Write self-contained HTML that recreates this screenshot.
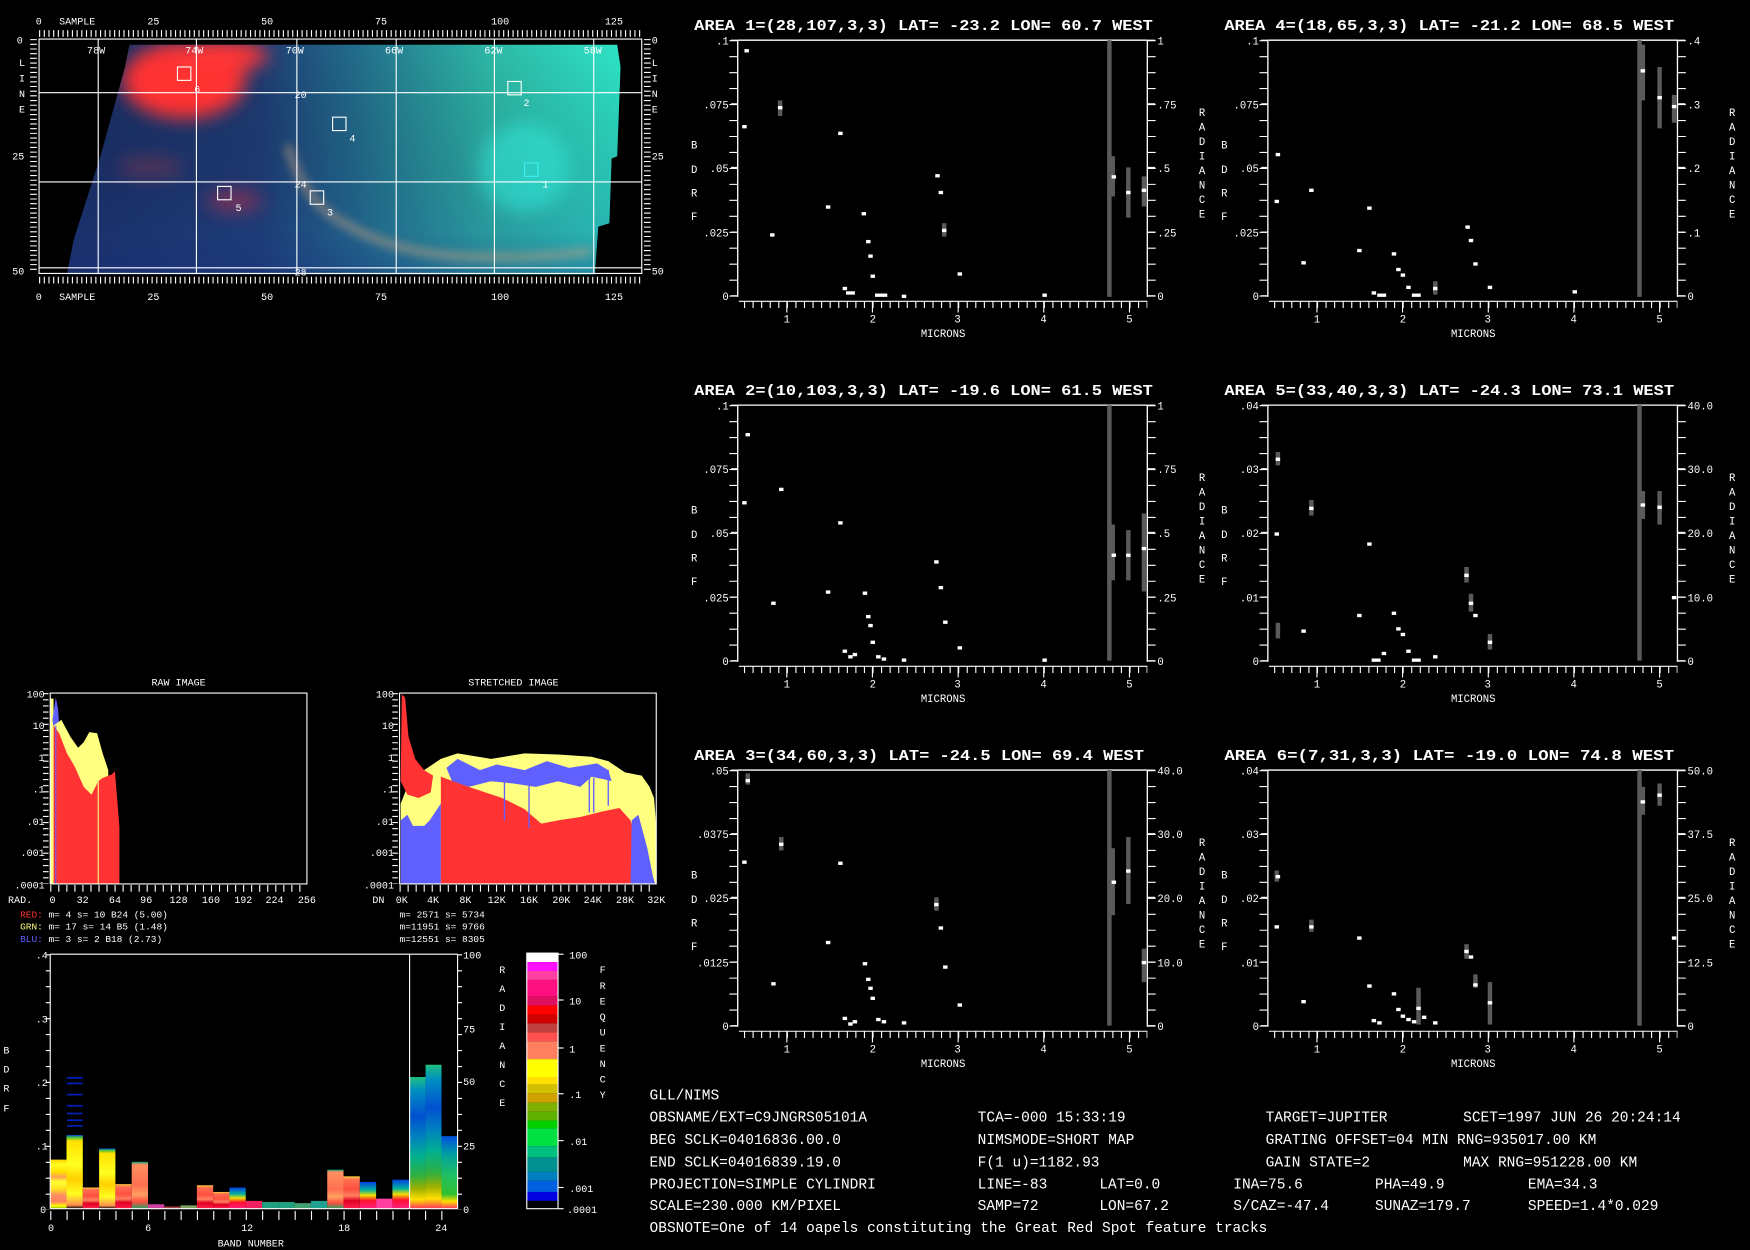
<!DOCTYPE html>
<html><head><meta charset="utf-8"><style>
html,body{margin:0;padding:0;background:#000;width:1750px;height:1250px;overflow:hidden}
svg{display:block}
text{font-family:"Liberation Mono","DejaVu Sans Mono",monospace;fill:#fff}
</style></head><body>
<svg width="1750" height="1250" viewBox="0 0 1568 1120" xmlns="http://www.w3.org/2000/svg">
<defs>
<linearGradient id="mapg" x1="0" y1="0" x2="1" y2="0">
<stop offset="0" stop-color="#1a2c62"/><stop offset=".35" stop-color="#1e3c74"/><stop offset=".5" stop-color="#22688a"/><stop offset=".75" stop-color="#2ebaa8"/><stop offset="1" stop-color="#2eeacc"/></linearGradient>
<linearGradient id="mapv" x1="0" y1="0" x2="0" y2="1"><stop offset="0" stop-color="#000" stop-opacity="0"/><stop offset=".8" stop-color="#1a3a80" stop-opacity=".25"/><stop offset="1" stop-color="#1a3080" stop-opacity=".5"/></linearGradient>
<filter id="bl"><feGaussianBlur stdDeviation="8"/></filter>
<filter id="bl2"><feGaussianBlur stdDeviation="4"/></filter>
<clipPath id="mclip"><polygon points="116,40 553,40 556,60 553,140 548,142 546,200 536,203 533,246 100,246 60,246 66,215 90,140 112,60"/></clipPath>
<linearGradient id="gy" x1="0" y1="0" x2="0" y2="1">
<stop offset="0" stop-color="#ffd000"/><stop offset=".1" stop-color="#ffff20"/><stop offset=".25" stop-color="#ffe000"/><stop offset=".35" stop-color="#ffa050"/><stop offset=".45" stop-color="#ffff30"/><stop offset=".6" stop-color="#ffe020"/><stop offset=".72" stop-color="#ff9060"/><stop offset=".85" stop-color="#ff8060"/><stop offset=".95" stop-color="#ffff00"/><stop offset="1" stop-color="#60b000"/></linearGradient>
<linearGradient id="gy2" x1="0" y1="0" x2="0" y2="1">
<stop offset="0" stop-color="#0040e0"/><stop offset=".03" stop-color="#40c040"/><stop offset=".08" stop-color="#ffe000"/><stop offset=".4" stop-color="#ffff20"/><stop offset=".6" stop-color="#ffd000"/><stop offset=".8" stop-color="#ffff20"/><stop offset=".95" stop-color="#ff9050"/><stop offset="1" stop-color="#000"/></linearGradient>
<linearGradient id="gr" x1="0" y1="0" x2="0" y2="1">
<stop offset="0" stop-color="#ffd040"/><stop offset=".1" stop-color="#ff7050"/><stop offset=".4" stop-color="#ff5040"/><stop offset=".6" stop-color="#ff8060"/><stop offset=".75" stop-color="#e00020"/><stop offset="1" stop-color="#ff2050"/></linearGradient>
<linearGradient id="go" x1="0" y1="0" x2="0" y2="1">
<stop offset="0" stop-color="#00a080"/><stop offset=".06" stop-color="#ff9060"/><stop offset=".5" stop-color="#ff7050"/><stop offset=".7" stop-color="#ffa060"/><stop offset=".85" stop-color="#ff5040"/><stop offset="1" stop-color="#20a060"/></linearGradient>
<linearGradient id="gb" x1="0" y1="0" x2="0" y2="1">
<stop offset="0" stop-color="#0040e0"/><stop offset=".3" stop-color="#00b0a0"/><stop offset=".5" stop-color="#f0e000"/><stop offset=".7" stop-color="#ff1030"/><stop offset="1" stop-color="#ff2080"/></linearGradient>
<linearGradient id="gt" x1="0" y1="0" x2="0" y2="1">
<stop offset="0" stop-color="#20c080"/><stop offset=".1" stop-color="#0090c0"/><stop offset=".3" stop-color="#0050d0"/><stop offset=".45" stop-color="#0080c0"/><stop offset=".6" stop-color="#00b090"/><stop offset=".75" stop-color="#30b040"/><stop offset=".85" stop-color="#a0b000"/><stop offset=".93" stop-color="#ffe000"/><stop offset="1" stop-color="#ff3060"/></linearGradient>
<linearGradient id="gt2" x1="0" y1="0" x2="0" y2="1">
<stop offset="0" stop-color="#0050e0"/><stop offset=".25" stop-color="#00a0a0"/><stop offset=".55" stop-color="#20c060"/><stop offset=".8" stop-color="#30c030"/><stop offset=".9" stop-color="#ffe000"/><stop offset="1" stop-color="#ff3060"/></linearGradient>
<g id="pframe" stroke="#fff" fill="none">
<line x1="661" y1="36" x2="1028" y2="36" stroke-width="1.2"/>
<line x1="661" y1="36" x2="661" y2="266" stroke-width="1.2"/>
<line x1="1028" y1="36" x2="1028" y2="266" stroke-width="1.2"/>
<line x1="657" y1="36" x2="657" y2="267" stroke-width="7" stroke-dasharray="1 13.3"/>
<line x1="1032" y1="36" x2="1032" y2="267" stroke-width="7" stroke-dasharray="1 13.3"/>
<line x1="655" y1="36" x2="661" y2="36"/><line x1="655" y1="93" x2="661" y2="93"/><line x1="655" y1="150" x2="661" y2="150"/><line x1="655" y1="208" x2="661" y2="208"/><line x1="655" y1="265" x2="661" y2="265"/>
<line x1="1028" y1="36" x2="1035" y2="36"/><line x1="1028" y1="93" x2="1035" y2="93"/><line x1="1028" y1="150" x2="1035" y2="150"/><line x1="1028" y1="208" x2="1035" y2="208"/><line x1="1028" y1="265" x2="1035" y2="265"/>
<line x1="662" y1="270" x2="1028" y2="270" stroke-width="1"/>
<line x1="666.6" y1="273" x2="1028" y2="273" stroke-width="6" stroke-dasharray="1 6.675"/>
<line x1="705" y1="270" x2="705" y2="280"/><line x1="781.7" y1="270" x2="781.7" y2="280"/><line x1="858.5" y1="270" x2="858.5" y2="280"/><line x1="935.2" y1="270" x2="935.2" y2="280"/><line x1="1012" y1="270" x2="1012" y2="280"/>
</g>
<g id="pxl" font-size="9.5" text-anchor="middle">
<text x="705" y="289">1</text><text x="782" y="289">2</text><text x="858" y="289">3</text><text x="935" y="289">4</text><text x="1012" y="289">5</text>
<text x="845" y="302">MICRONS</text>
<text x="622" y="133">B</text><text x="622" y="155">D</text><text x="622" y="176">R</text><text x="622" y="197">F</text>
</g>
<g id="prl" font-size="9.5" text-anchor="middle">
<text x="1077" y="104">R</text><text x="1077" y="117">A</text><text x="1077" y="130">D</text><text x="1077" y="143">I</text><text x="1077" y="156">A</text><text x="1077" y="169">N</text><text x="1077" y="182">C</text><text x="1077" y="195">E</text>
</g>
</defs>

<!-- ===== MAP ===== -->
<g clip-path="url(#mclip)">
<rect x="50" y="35" width="520" height="215" fill="url(#mapg)"/>
<rect x="50" y="35" width="520" height="215" fill="url(#mapv)"/>
<g filter="url(#bl)">
<ellipse cx="165" cy="72" rx="55" ry="34" fill="#ff3030"/>
<ellipse cx="195" cy="50" rx="45" ry="14" fill="#ff3535"/>
<ellipse cx="210" cy="180" rx="25" ry="10" fill="#a03050" opacity=".7"/>
<ellipse cx="135" cy="150" rx="30" ry="10" fill="#703050" opacity=".6"/>
<ellipse cx="470" cy="150" rx="40" ry="40" fill="#30f0e0" opacity=".5"/>
</g>
<path d="M258,130 Q270,175 300,195 Q350,228 420,230 Q480,232 530,225" stroke="#c8a080" stroke-width="8" fill="none" opacity=".5" filter="url(#bl2)"/>
</g>
<g stroke="#fff" stroke-width="1" fill="none">
<rect x="35" y="35" width="540" height="210"/>
<line x1="35" y1="83" x2="575" y2="83"/><line x1="35" y1="163" x2="575" y2="163"/><line x1="35" y1="240" x2="575" y2="240"/>
<line x1="88" y1="35" x2="88" y2="245"/><line x1="176" y1="35" x2="176" y2="245"/><line x1="266" y1="35" x2="266" y2="245"/><line x1="355" y1="35" x2="355" y2="245"/><line x1="443" y1="35" x2="443" y2="245"/><line x1="532" y1="35" x2="532" y2="245"/>
<line x1="35" y1="30" x2="575" y2="30" stroke-width="6" stroke-dasharray="1 3.2"/>
<line x1="35" y1="251" x2="575" y2="251" stroke-width="6" stroke-dasharray="1 3.2"/>
<line x1="30" y1="35" x2="30" y2="245" stroke-width="6" stroke-dasharray="1 3.2"/>
<line x1="580" y1="35" x2="580" y2="245" stroke-width="6" stroke-dasharray="1 3.2"/>
<rect x="159" y="60" width="12" height="12"/><rect x="455" y="73" width="12" height="12"/><rect x="298" y="105" width="12" height="12"/><rect x="195" y="167" width="12" height="12"/><rect x="278" y="171" width="12" height="12"/>
<rect x="470" y="146" width="12" height="12" stroke="#40f0f0"/>
</g>
<g font-size="9" fill="#fff">
<text x="32" y="22">0</text><text x="53" y="22">SAMPLE</text><text x="132" y="22">25</text><text x="234" y="22">50</text><text x="336" y="22">75</text><text x="440" y="22">100</text><text x="542" y="22">125</text>
<text x="32" y="269">0</text><text x="53" y="269">SAMPLE</text><text x="132" y="269">25</text><text x="234" y="269">50</text><text x="336" y="269">75</text><text x="440" y="269">100</text><text x="542" y="269">125</text>
<text x="15" y="39">0</text><text x="11" y="143">25</text><text x="11" y="246">50</text>
<text x="584" y="39">0</text><text x="584" y="143">25</text><text x="584" y="246">50</text>
<text x="17" y="59">L</text><text x="17" y="73">I</text><text x="17" y="87">N</text><text x="17" y="101">E</text>
<text x="584" y="59">L</text><text x="584" y="73">I</text><text x="584" y="87">N</text><text x="584" y="101">E</text>
<text x="78" y="48">78W</text><text x="166" y="48">74W</text><text x="256" y="48">70W</text><text x="345" y="48">66W</text><text x="434" y="48">62W</text><text x="523" y="48">58W</text>
<text x="264" y="88">20</text><text x="264" y="168">24</text><text x="264" y="247">28</text>
<text x="174" y="83">6</text><text x="469" y="95">2</text><text x="313" y="127">4</text><text x="211" y="189">5</text><text x="293" y="193">3</text><text x="486" y="168" fill="#40f0f0">1</text>
</g>

<!-- ===== SPECTRAL PANELS ===== -->
<g font-size="13.5" font-weight="bold" xml:space="preserve">
<text x="622" y="27" textLength="411" lengthAdjust="spacingAndGlyphs">AREA 1=(28,107,3,3) LAT= -23.2 LON=  60.7 WEST</text>
<text x="1097" y="27" textLength="403" lengthAdjust="spacingAndGlyphs">AREA 4=(18,65,3,3) LAT= -21.2 LON=  68.5 WEST</text>
<text x="622" y="354" textLength="411" lengthAdjust="spacingAndGlyphs">AREA 2=(10,103,3,3) LAT= -19.6 LON=  61.5 WEST</text>
<text x="1097" y="354" textLength="403" lengthAdjust="spacingAndGlyphs">AREA 5=(33,40,3,3) LAT= -24.3 LON=  73.1 WEST</text>
<text x="622" y="681" textLength="403" lengthAdjust="spacingAndGlyphs">AREA 3=(34,60,3,3) LAT= -24.5 LON=  69.4 WEST</text>
<text x="1097" y="681" textLength="403" lengthAdjust="spacingAndGlyphs">AREA 6=(7,31,3,3) LAT= -19.0 LON=  74.8 WEST</text>
</g>
<use href="#pframe"/><use href="#pframe" transform="translate(475,0)"/>
<use href="#pframe" transform="translate(0,327)"/><use href="#pframe" transform="translate(475,327)"/>
<use href="#pframe" transform="translate(0,654)"/><use href="#pframe" transform="translate(475,654)"/>
<use href="#pxl"/><use href="#pxl" transform="translate(475,0)"/>
<use href="#pxl" transform="translate(0,327)"/><use href="#pxl" transform="translate(475,327)"/>
<use href="#pxl" transform="translate(0,654)"/><use href="#pxl" transform="translate(475,654)"/>
<use href="#prl"/><use href="#prl" transform="translate(475,0)"/>
<use href="#prl" transform="translate(0,327)"/><use href="#prl" transform="translate(475,327)"/>
<use href="#prl" transform="translate(0,654)"/><use href="#prl" transform="translate(475,654)"/>
<g font-size="9.5" text-anchor="end">
<text x="653" y="40">.1</text><text x="653" y="97">.075</text><text x="653" y="154">.05</text><text x="653" y="212">.025</text><text x="653" y="269">0</text>
<text x="1128" y="40">.1</text><text x="1128" y="97">.075</text><text x="1128" y="154">.05</text><text x="1128" y="212">.025</text><text x="1128" y="269">0</text>
<text x="653" y="367">.1</text><text x="653" y="424">.075</text><text x="653" y="481">.05</text><text x="653" y="539">.025</text><text x="653" y="596">0</text>
<text x="1128" y="367">.04</text><text x="1128" y="424">.03</text><text x="1128" y="481">.02</text><text x="1128" y="539">.01</text><text x="1128" y="596">0</text>
<text x="653" y="694">.05</text><text x="653" y="751">.0375</text><text x="653" y="808">.025</text><text x="653" y="866">.0125</text><text x="653" y="923">0</text>
<text x="1128" y="694">.04</text><text x="1128" y="751">.03</text><text x="1128" y="808">.02</text><text x="1128" y="866">.01</text><text x="1128" y="923">0</text>
</g>
<g font-size="9.5">
<text x="1037" y="40">1</text><text x="1037" y="97">.75</text><text x="1037" y="154">.5</text><text x="1037" y="212">.25</text><text x="1037" y="269">0</text>
<text x="1512" y="40">.4</text><text x="1512" y="97">.3</text><text x="1512" y="154">.2</text><text x="1512" y="212">.1</text><text x="1512" y="269">0</text>
<text x="1037" y="367">1</text><text x="1037" y="424">.75</text><text x="1037" y="481">.5</text><text x="1037" y="539">.25</text><text x="1037" y="596">0</text>
<text x="1512" y="367">40.0</text><text x="1512" y="424">30.0</text><text x="1512" y="481">20.0</text><text x="1512" y="539">10.0</text><text x="1512" y="596">0</text>
<text x="1037" y="694">40.0</text><text x="1037" y="751">30.0</text><text x="1037" y="808">20.0</text><text x="1037" y="866">10.0</text><text x="1037" y="923">0</text>
<text x="1512" y="694">50.0</text><text x="1512" y="751">37.5</text><text x="1512" y="808">25.0</text><text x="1512" y="866">12.5</text><text x="1512" y="923">0</text>
</g>
<!-- gray bars -->
<g fill="#5a5a5a">
<rect x="992" y="36" width="4" height="230"/><rect x="995" y="140" width="4" height="36"/><rect x="1009" y="150" width="4" height="45"/><rect x="1023" y="158" width="4" height="27"/><rect x="697" y="90" width="4" height="14"/><rect x="844" y="200" width="4" height="12"/>
<rect x="1467" y="36" width="4" height="230"/><rect x="1470" y="40" width="4" height="50"/><rect x="1485" y="60" width="4" height="55"/><rect x="1498" y="85" width="4" height="25"/><rect x="1284" y="252" width="4" height="12"/>
<rect x="992" y="363" width="4" height="229"/><rect x="995" y="470" width="4" height="50"/><rect x="1009" y="475" width="4" height="45"/><rect x="1023" y="460" width="4" height="70"/>
<rect x="1467" y="363" width="4" height="229"/><rect x="1470" y="440" width="4" height="25"/><rect x="1485" y="440" width="4" height="30"/><rect x="1312" y="508" width="4" height="14"/><rect x="1316" y="532" width="4" height="16"/><rect x="1333" y="568" width="4" height="14"/><rect x="1143" y="405" width="4" height="12"/><rect x="1173" y="448" width="4" height="14"/><rect x="1143" y="558" width="4" height="14"/>
<rect x="992" y="690" width="4" height="229"/><rect x="995" y="760" width="4" height="60"/><rect x="1009" y="750" width="4" height="60"/><rect x="1023" y="850" width="4" height="30"/><rect x="837" y="804" width="4" height="12"/><rect x="668" y="693" width="4" height="10"/><rect x="698" y="750" width="4" height="12"/>
<rect x="1467" y="690" width="4" height="229"/><rect x="1470" y="705" width="4" height="25"/><rect x="1485" y="702" width="4" height="20"/><rect x="1269" y="885" width="4" height="33"/><rect x="1312" y="846" width="4" height="13"/><rect x="1320" y="873" width="4" height="12"/><rect x="1333" y="880" width="4" height="38"/><rect x="1142" y="780" width="4" height="10"/><rect x="1173" y="824" width="4" height="11"/>
</g>
<g fill="#fff">
<rect x="667" y="44" width="4" height="3"/><rect x="665" y="112" width="4" height="3"/><rect x="690" y="209" width="4" height="3"/><rect x="697" y="95" width="4" height="3"/><rect x="740" y="184" width="4" height="3"/><rect x="751" y="118" width="4" height="3"/><rect x="755" y="257" width="4" height="3"/><rect x="758" y="261" width="8" height="3"/><rect x="772" y="190" width="4" height="3"/><rect x="776" y="215" width="4" height="3"/><rect x="778" y="228" width="4" height="3"/><rect x="780" y="246" width="4" height="3"/><rect x="784" y="263" width="11" height="3"/><rect x="808" y="264" width="4" height="3"/><rect x="838" y="156" width="4" height="3"/><rect x="841" y="171" width="4" height="3"/><rect x="844" y="205" width="4" height="3"/><rect x="858" y="244" width="4" height="3"/><rect x="934" y="263" width="4" height="3"/><rect x="996" y="157" width="4" height="3"/><rect x="1009" y="171" width="4" height="3"/><rect x="1023" y="169" width="4" height="3"/>
<rect x="1142" y="179" width="4" height="3"/><rect x="1143" y="137" width="4" height="3"/><rect x="1166" y="234" width="4" height="3"/><rect x="1173" y="169" width="4" height="3"/><rect x="1216" y="223" width="4" height="3"/><rect x="1225" y="185" width="4" height="3"/><rect x="1229" y="261" width="4" height="3"/><rect x="1234" y="263" width="8" height="3"/><rect x="1247" y="226" width="4" height="3"/><rect x="1251" y="240" width="4" height="3"/><rect x="1255" y="245" width="4" height="3"/><rect x="1260" y="256" width="4" height="3"/><rect x="1265" y="263" width="8" height="3"/><rect x="1284" y="257" width="4" height="3"/><rect x="1313" y="202" width="4" height="3"/><rect x="1316" y="214" width="4" height="3"/><rect x="1320" y="235" width="4" height="3"/><rect x="1333" y="256" width="4" height="3"/><rect x="1409" y="260" width="4" height="3"/><rect x="1470" y="62" width="4" height="3"/><rect x="1485" y="86" width="4" height="3"/><rect x="1498" y="94" width="4" height="3"/>
<rect x="665" y="449" width="4" height="3"/><rect x="668" y="388" width="4" height="3"/><rect x="691" y="539" width="4" height="3"/><rect x="698" y="437" width="4" height="3"/><rect x="740" y="529" width="4" height="3"/><rect x="751" y="467" width="4" height="3"/><rect x="755" y="582" width="4" height="3"/><rect x="760" y="587" width="4" height="3"/><rect x="764" y="585" width="4" height="3"/><rect x="773" y="530" width="4" height="3"/><rect x="776" y="551" width="4" height="3"/><rect x="778" y="559" width="4" height="3"/><rect x="780" y="574" width="4" height="3"/><rect x="785" y="587" width="4" height="3"/><rect x="790" y="589" width="4" height="3"/><rect x="808" y="590" width="4" height="3"/><rect x="837" y="502" width="4" height="3"/><rect x="841" y="525" width="4" height="3"/><rect x="845" y="556" width="4" height="3"/><rect x="858" y="579" width="4" height="3"/><rect x="934" y="590" width="4" height="3"/><rect x="996" y="496" width="4" height="3"/><rect x="1009" y="496" width="4" height="3"/><rect x="1023" y="490" width="4" height="3"/>
<rect x="1142" y="477" width="4" height="3"/><rect x="1143" y="410" width="4" height="3"/><rect x="1166" y="564" width="4" height="3"/><rect x="1173" y="454" width="4" height="3"/><rect x="1216" y="550" width="4" height="3"/><rect x="1225" y="486" width="4" height="3"/><rect x="1229" y="590" width="8" height="3"/><rect x="1238" y="584" width="4" height="3"/><rect x="1247" y="548" width="4" height="3"/><rect x="1251" y="562" width="4" height="3"/><rect x="1255" y="567" width="4" height="3"/><rect x="1260" y="582" width="4" height="3"/><rect x="1265" y="590" width="8" height="3"/><rect x="1284" y="587" width="4" height="3"/><rect x="1312" y="514" width="4" height="3"/><rect x="1316" y="539" width="4" height="3"/><rect x="1320" y="550" width="4" height="3"/><rect x="1333" y="574" width="4" height="3"/><rect x="1470" y="451" width="4" height="3"/><rect x="1485" y="453" width="4" height="3"/><rect x="1498" y="534" width="4" height="3"/>
<rect x="665" y="771" width="4" height="3"/><rect x="668" y="698" width="4" height="3"/><rect x="691" y="880" width="4" height="3"/><rect x="698" y="755" width="4" height="3"/><rect x="740" y="843" width="4" height="3"/><rect x="751" y="772" width="4" height="3"/><rect x="755" y="911" width="4" height="3"/><rect x="760" y="916" width="4" height="3"/><rect x="764" y="914" width="4" height="3"/><rect x="773" y="862" width="4" height="3"/><rect x="776" y="876" width="4" height="3"/><rect x="778" y="884" width="4" height="3"/><rect x="780" y="893" width="4" height="3"/><rect x="785" y="912" width="4" height="3"/><rect x="790" y="914" width="4" height="3"/><rect x="808" y="915" width="4" height="3"/><rect x="837" y="809" width="4" height="3"/><rect x="841" y="830" width="4" height="3"/><rect x="845" y="865" width="4" height="3"/><rect x="858" y="899" width="4" height="3"/><rect x="996" y="789" width="4" height="3"/><rect x="1009" y="779" width="4" height="3"/><rect x="1023" y="861" width="4" height="3"/>
<rect x="1142" y="829" width="4" height="3"/><rect x="1143" y="784" width="4" height="3"/><rect x="1166" y="896" width="4" height="3"/><rect x="1173" y="829" width="4" height="3"/><rect x="1216" y="839" width="4" height="3"/><rect x="1225" y="882" width="4" height="3"/><rect x="1229" y="913" width="4" height="3"/><rect x="1234" y="915" width="4" height="3"/><rect x="1247" y="889" width="4" height="3"/><rect x="1251" y="903" width="4" height="3"/><rect x="1255" y="909" width="4" height="3"/><rect x="1260" y="912" width="4" height="3"/><rect x="1265" y="914" width="4" height="3"/><rect x="1269" y="902" width="4" height="3"/><rect x="1274" y="910" width="4" height="3"/><rect x="1284" y="915" width="4" height="3"/><rect x="1312" y="851" width="4" height="3"/><rect x="1316" y="856" width="4" height="3"/><rect x="1320" y="881" width="4" height="3"/><rect x="1333" y="897" width="4" height="3"/><rect x="1470" y="717" width="4" height="3"/><rect x="1485" y="711" width="4" height="3"/><rect x="1498" y="839" width="4" height="3"/>
</g>

<!-- ===== HISTOGRAMS ===== -->
<g font-size="9" text-anchor="middle">
<text x="160" y="614">RAW IMAGE</text><text x="460" y="614">STRETCHED IMAGE</text>
</g>
<polygon points="45,792 45,626 48,626 48,792" fill="#ffff80"/>
<polygon points="47,645 50,625 52,635 53,650 49,660" fill="#6060ff"/>
<polygon points="48,792 48,650 55,645 63,660 70,670 75,665 80,656 87,657 92,675 97,690 98,792" fill="#ffff80"/>
<polygon points="48,792 48,650 53,657 60,675 67,687 75,705 82,712 88,700 92,697 100,694 103,691 107,741 107,792" fill="#ff3333"/>
<line x1="50" y1="650" x2="50" y2="792" stroke="#6060ff" stroke-width="1"/>
<line x1="88" y1="700" x2="88" y2="792" stroke="#ffff80" stroke-width="1"/>
<polygon points="359,792 359,720 365,705 372,710 380,690 395,680 410,675 440,680 470,675 500,676 530,678 545,682 560,692 575,695 582,705 586,715 588,740 588,792" fill="#ffff80"/>
<polygon points="400,688 410,680 430,690 445,685 470,690 490,682 510,688 535,684 545,690 548,700 540,698 530,696 520,705 500,700 480,705 460,702 440,700 420,705 405,700" fill="#6060ff"/>
<polygon points="359,792 359,735 365,730 370,740 380,740 385,735 395,720 395,792" fill="#6060ff"/>
<polygon points="395,792 395,696 420,705 450,715 470,725 485,738 500,735 520,732 540,727 555,724 565,735 572,760 575,792" fill="#ff3333"/>
<polygon points="359,700 360,622 363,625 366,660 372,680 380,690 388,695 386,710 375,715 365,712" fill="#ff3333"/>
<polygon points="565,792 566,735 572,730 580,760 585,785 587,792" fill="#6060ff"/>
<g stroke="#6060ff" stroke-width="1.2"><line x1="452" y1="700" x2="452" y2="735"/><line x1="474" y1="700" x2="474" y2="742"/><line x1="528" y1="695" x2="528" y2="728"/><line x1="532" y1="697" x2="532" y2="728"/><line x1="545" y1="690" x2="545" y2="722"/></g>
<g stroke="#fff" fill="none">
<rect x="45" y="621" width="230" height="171"/>
<rect x="358" y="621" width="230" height="171"/>
<line x1="41" y1="621" x2="41" y2="792" stroke-width="5" stroke-dasharray="1 4.5"/>
<line x1="354" y1="621" x2="354" y2="792" stroke-width="5" stroke-dasharray="1 4.5"/>
<line x1="45" y1="796" x2="275" y2="796" stroke-width="6" stroke-dasharray="1 6.2"/>
<line x1="358" y1="796" x2="588" y2="796" stroke-width="6" stroke-dasharray="1 6.2"/>
</g>
<g font-size="9" text-anchor="end">
<text x="40" y="625">100</text><text x="40" y="653">10</text><text x="40" y="682">1</text><text x="40" y="710">.1</text><text x="40" y="739">.01</text><text x="40" y="767">.001</text><text x="40" y="796">.0001</text>
<text x="353" y="625">100</text><text x="353" y="653">10</text><text x="353" y="682">1</text><text x="353" y="710">.1</text><text x="353" y="739">.01</text><text x="353" y="767">.001</text><text x="353" y="796">.0001</text>
</g>
<g font-size="9" text-anchor="middle">
<text x="18" y="809">RAD.</text><text x="47" y="809">0</text><text x="74" y="809">32</text><text x="103" y="809">64</text><text x="131" y="809">96</text><text x="160" y="809">128</text><text x="189" y="809">160</text><text x="218" y="809">192</text><text x="246" y="809">224</text><text x="275" y="809">256</text>
<text x="339" y="809">DN</text><text x="360" y="809">0K</text><text x="388" y="809">4K</text><text x="417" y="809">8K</text><text x="445" y="809">12K</text><text x="474" y="809">16K</text><text x="503" y="809">20K</text><text x="531" y="809">24K</text><text x="560" y="809">28K</text><text x="588" y="809">32K</text>
</g>
<g font-size="8.5" xml:space="preserve">
<text x="18" y="822"><tspan fill="#ff3333">RED:</tspan> m=    4 s=   10 B24 (5.00)</text>
<text x="18" y="833"><tspan fill="#ffff80">GRN:</tspan> m=   17 s=   14 B5  (1.48)</text>
<text x="18" y="844"><tspan fill="#6060ff">BLU:</tspan> m=    3 s=    2 B18 (2.73)</text>
<text x="358" y="822">m= 2571 s= 5734</text>
<text x="358" y="833">m=11951 s= 9766</text>
<text x="358" y="844">m=12551 s= 8305</text>
</g>

<!-- ===== BAND CHART ===== -->
<g>
<rect x="45" y="1039" width="14.6" height="44" fill="url(#gy)"/>
<rect x="59.6" y="1017" width="14.6" height="66" fill="url(#gy2)"/>
<rect x="74.2" y="1064" width="14.6" height="19" fill="url(#gr)"/>
<rect x="88.8" y="1029" width="14.6" height="54" fill="url(#gy2)"/>
<rect x="103.4" y="1061" width="14.6" height="22" fill="url(#gr)"/>
<rect x="118" y="1041" width="14.6" height="42" fill="url(#go)"/>
<rect x="132.6" y="1079" width="14.6" height="4" fill="#d040a0"/>
<rect x="147.2" y="1081" width="14.6" height="2" fill="#a04040"/>
<rect x="161.8" y="1080" width="14.6" height="3" fill="#80a060"/>
<rect x="176.4" y="1062" width="14.6" height="21" fill="url(#gr)"/>
<rect x="191" y="1068" width="14.6" height="15" fill="url(#gr)"/>
<rect x="205.6" y="1064" width="14.6" height="19" fill="url(#gb)"/>
<rect x="220.2" y="1076" width="14.6" height="7" fill="#f02060"/>
<rect x="234.8" y="1077" width="14.6" height="6" fill="#20a080"/>
<rect x="249.4" y="1077" width="14.6" height="6" fill="#20a080"/>
<rect x="264" y="1078" width="14.6" height="5" fill="#40a070"/>
<rect x="278.6" y="1076" width="14.6" height="7" fill="#20a090"/>
<rect x="293.2" y="1048" width="14.6" height="35" fill="url(#go)"/>
<rect x="307.8" y="1054" width="14.6" height="29" fill="url(#gr)"/>
<rect x="322.4" y="1059" width="14.6" height="24" fill="url(#gb)"/>
<rect x="337" y="1074" width="14.6" height="9" fill="#ff40a0"/>
<rect x="351.6" y="1057" width="15" height="26" fill="url(#gb)"/>
<rect x="367" y="965" width="14.3" height="118" fill="url(#gt)"/>
<rect x="381.3" y="954" width="14.3" height="129" fill="url(#gt)"/>
<rect x="395.6" y="1018" width="14.3" height="65" fill="url(#gt2)"/>
<g fill="#0020c0"><rect x="60" y="965" width="14" height="1.5"/><rect x="60" y="970" width="14" height="1.5"/><rect x="60" y="980" width="14" height="1.5"/><rect x="60" y="990" width="14" height="1.5"/><rect x="60" y="997" width="14" height="1.5"/><rect x="60" y="1003" width="14" height="1.5"/><rect x="60" y="1008" width="14" height="1.5"/></g>
</g>
<g stroke="#fff" fill="none">
<line x1="45" y1="855" x2="410" y2="855"/>
<line x1="45" y1="855" x2="45" y2="1083"/>
<line x1="410" y1="855" x2="410" y2="1083"/>
<line x1="367" y1="855" x2="367" y2="1083"/>
<line x1="45" y1="1083" x2="410" y2="1083"/>
<line x1="43" y1="855" x2="43" y2="1084" stroke-width="4" stroke-dasharray="1 13.3"/>
<line x1="412" y1="855" x2="412" y2="1084" stroke-width="4" stroke-dasharray="1 13.3"/>
<line x1="45" y1="1089" x2="410" y2="1089" stroke-width="8" stroke-dasharray="1 13.6"/>
</g>
<g font-size="9">
<text x="32" y="859">.4</text><text x="32" y="916">.3</text><text x="32" y="973">.2</text><text x="32" y="1030">.1</text><text x="36" y="1087">0</text>
<text x="415" y="859">100</text><text x="415" y="925">75</text><text x="415" y="972">50</text><text x="415" y="1030">25</text><text x="415" y="1087">0</text>
<text x="3" y="944">B</text><text x="3" y="961">D</text><text x="3" y="978">R</text><text x="3" y="996">F</text>
<text x="43" y="1103">0</text><text x="130" y="1103">6</text><text x="216" y="1103">12</text><text x="303" y="1103">18</text><text x="390" y="1103">24</text>
<text x="195" y="1117">BAND NUMBER</text>
<g text-anchor="middle"><text x="450" y="872">R</text><text x="450" y="889">A</text><text x="450" y="906">D</text><text x="450" y="923">I</text><text x="450" y="940">A</text><text x="450" y="957">N</text><text x="450" y="974">C</text><text x="450" y="991">E</text>
<text x="540" y="872">F</text><text x="540" y="886">R</text><text x="540" y="900">E</text><text x="540" y="914">Q</text><text x="540" y="928">U</text><text x="540" y="942">E</text><text x="540" y="956">N</text><text x="540" y="970">C</text><text x="540" y="984">Y</text></g>
<text x="510" y="859">100</text><text x="510" y="900">10</text><text x="510" y="943">1</text><text x="510" y="984">.1</text><text x="510" y="1026">.01</text><text x="510" y="1068">.001</text><text x="508" y="1087">.0001</text>
</g>
<!-- colour bar -->
<g>
<rect x="472" y="854" width="28" height="8" fill="#fff"/>
<rect x="472" y="862" width="28" height="8" fill="#ff10ff"/>
<rect x="472" y="870" width="28" height="8" fill="#ff40a0"/>
<rect x="472" y="878" width="28" height="15" fill="#ff1080"/>
<rect x="472" y="893" width="28" height="8" fill="#e01060"/>
<rect x="472" y="901" width="28" height="8" fill="#ff0000"/>
<rect x="472" y="909" width="28" height="8" fill="#d00000"/>
<rect x="472" y="917" width="28" height="8" fill="#c04040"/>
<rect x="472" y="925" width="28" height="8" fill="#ff5050"/>
<rect x="472" y="933" width="28" height="16" fill="#ff8060"/>
<rect x="472" y="949" width="28" height="16" fill="#ffff00"/>
<rect x="472" y="965" width="28" height="7" fill="#ffe000"/>
<rect x="472" y="972" width="28" height="8" fill="#d0c000"/>
<rect x="472" y="980" width="28" height="8" fill="#d0a000"/>
<rect x="472" y="988" width="28" height="8" fill="#80b000"/>
<rect x="472" y="996" width="28" height="8" fill="#60b000"/>
<rect x="472" y="1004" width="28" height="7" fill="#00d000"/>
<rect x="472" y="1011" width="28" height="16" fill="#00e040"/>
<rect x="472" y="1027" width="28" height="10" fill="#00c080"/>
<rect x="472" y="1037" width="28" height="13" fill="#009090"/>
<rect x="472" y="1050" width="28" height="8" fill="#0080c0"/>
<rect x="472" y="1058" width="28" height="10" fill="#0060e0"/>
<rect x="472" y="1068" width="28" height="8" fill="#0000e0"/>
<rect x="472" y="1076" width="28" height="7" fill="#000"/>
</g>
<g stroke="#fff" fill="none">
<rect x="472" y="854" width="28" height="229"/>
<line x1="500" y1="855" x2="505" y2="855"/><line x1="500" y1="896" x2="505" y2="896"/><line x1="500" y1="939" x2="505" y2="939"/><line x1="500" y1="980" x2="505" y2="980"/><line x1="500" y1="1022" x2="505" y2="1022"/><line x1="500" y1="1064" x2="505" y2="1064"/><line x1="500" y1="1083" x2="505" y2="1083"/>
</g>

<!-- ===== INFO TEXT ===== -->
<g font-size="13" xml:space="preserve">
<text x="582" y="985">GLL/NIMS</text>
<text x="582" y="1005">OBSNAME/EXT=C9JNGRS05101A</text><text x="876" y="1005">TCA=-000 15:33:19</text><text x="1134" y="1005">TARGET=JUPITER</text><text x="1311" y="1005">SCET=1997 JUN 26 20:24:14</text>
<text x="582" y="1025">BEG SCLK=04016836.00.0</text><text x="876" y="1025">NIMSMODE=SHORT MAP</text><text x="1134" y="1025">GRATING OFFSET=04 MIN RNG=935017.00 KM</text>
<text x="582" y="1045">END SCLK=04016839.19.0</text><text x="876" y="1045">F(1 u)=1182.93</text><text x="1134" y="1045">GAIN STATE=2</text><text x="1311" y="1045">MAX RNG=951228.00 KM</text>
<text x="582" y="1065">PROJECTION=SIMPLE CYLINDRI</text><text x="876" y="1065">LINE=-83</text><text x="985" y="1065">LAT=0.0</text><text x="1105" y="1065">INA=75.6</text><text x="1232" y="1065">PHA=49.9</text><text x="1369" y="1065">EMA=34.3</text>
<text x="582" y="1084">SCALE=230.000 KM/PIXEL</text><text x="876" y="1084">SAMP=72</text><text x="985" y="1084">LON=67.2</text><text x="1105" y="1084">S/CAZ=-47.4</text><text x="1232" y="1084">SUNAZ=179.7</text><text x="1369" y="1084">SPEED=1.4*0.029</text>
<text x="582" y="1104">OBSNOTE=One of 14 oapels constituting the Great Red Spot feature tracks</text>
</g>
</svg>
</body></html>
